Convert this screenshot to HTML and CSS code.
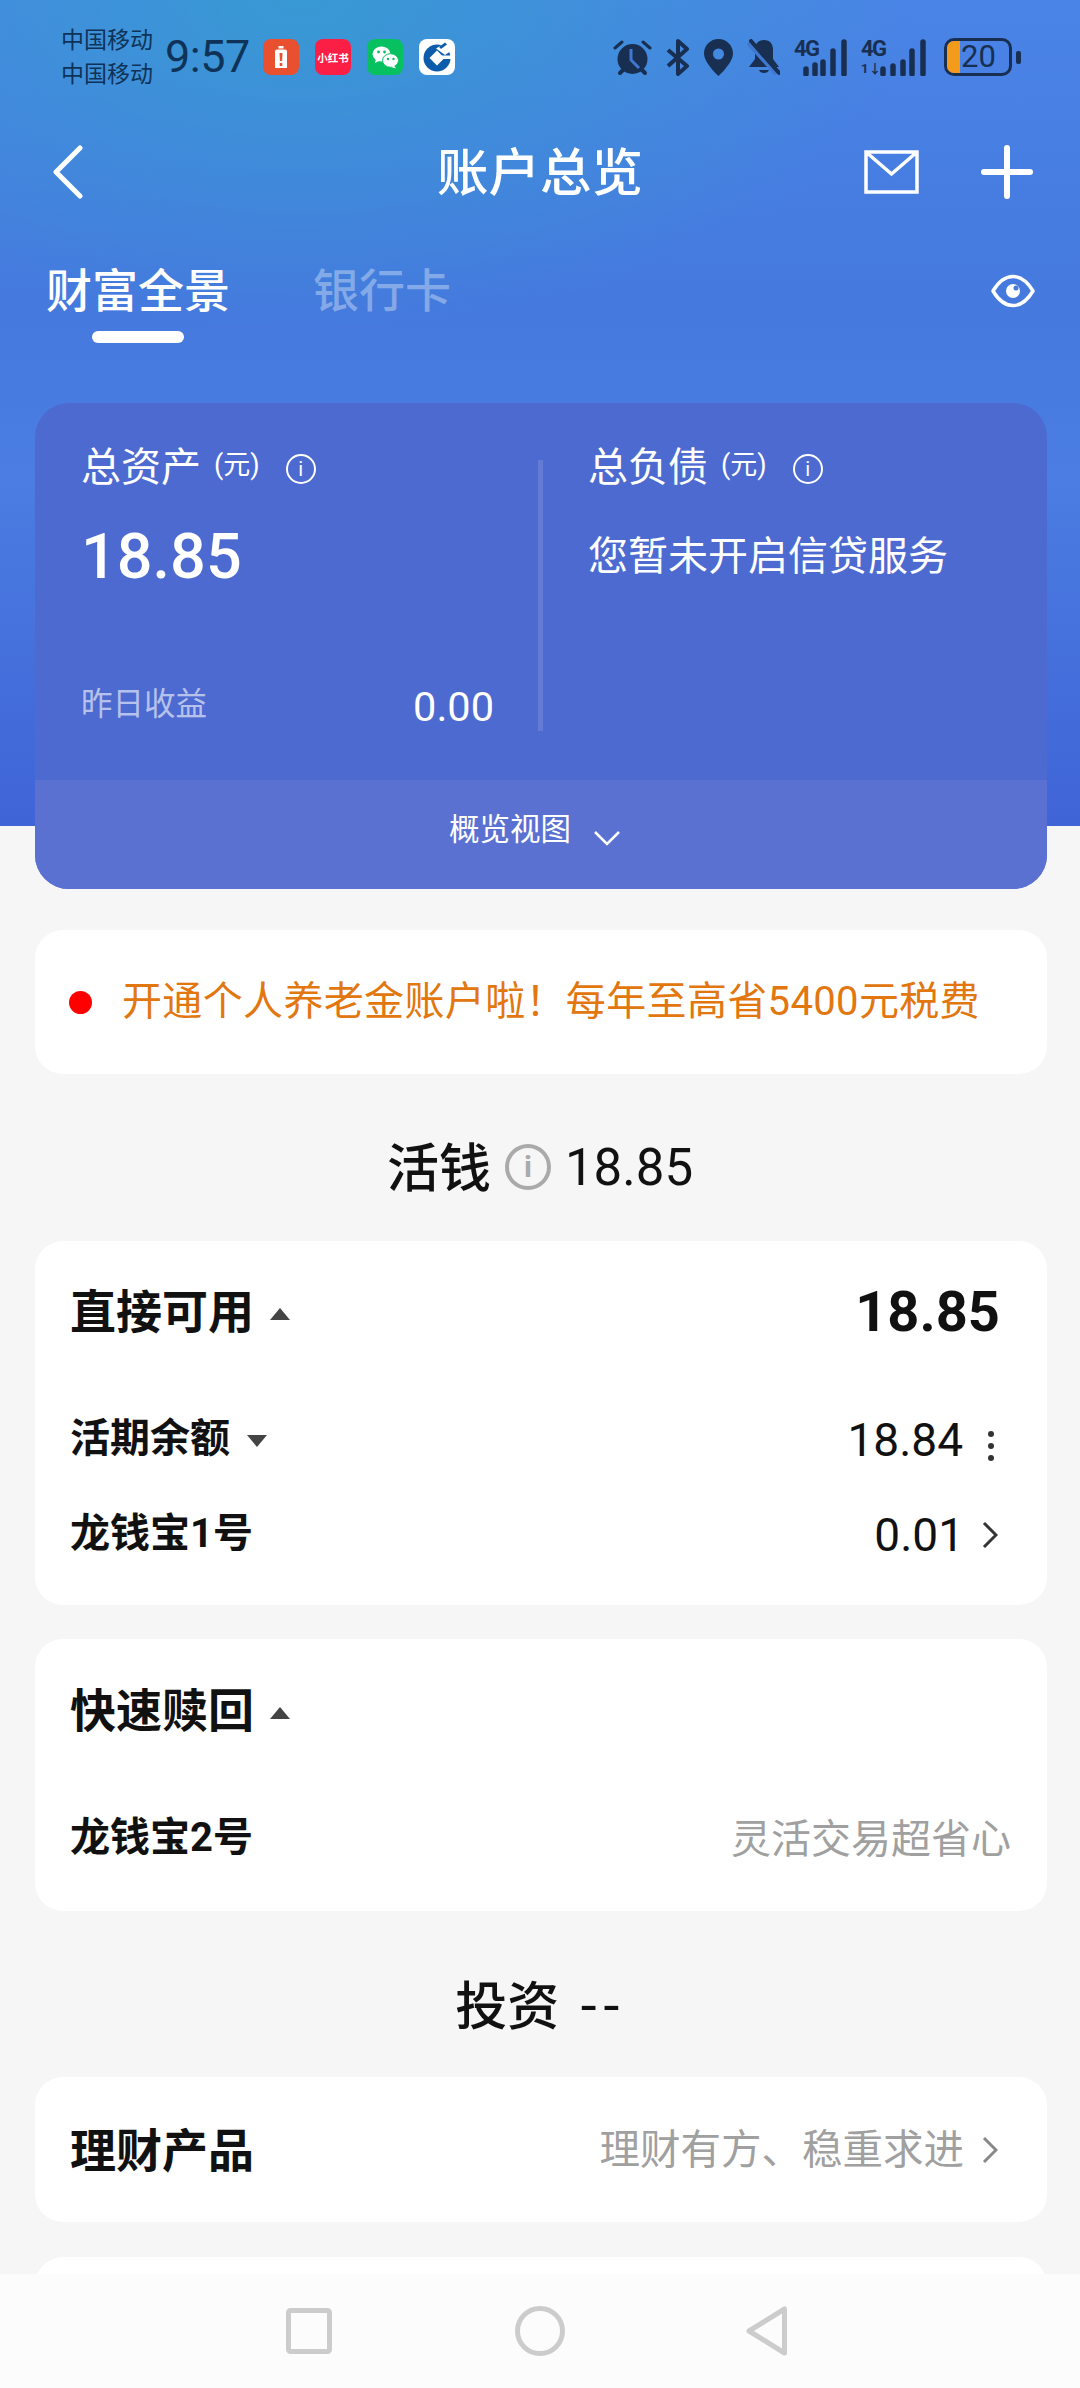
FILE: index.html
```html
<!DOCTYPE html>
<html lang="zh-CN">
<head>
    <meta charset="UTF-8">
    <meta name="viewport" content="width=device-width, initial-scale=1.0">
    <title>账户总览</title>
    <link rel="stylesheet" href="styles.css">
</head>
<body>
<div class="page">
    <div class="status">
        <div class="carrier"><span>中国移动</span><span>中国移动</span></div>
        <div class="clock">9:57</div>
        <div class="app-icons">
            <div class="app app-red">
                <svg viewBox="0 0 36 36" width="36" height="36"><path d="M15.500 7h5v2.500h-5z" fill="#fff"/><path d="M14 10.500h8a2 2 0 0 1 2 2V29h-12V12.500a2 2 0 0 1 2-2z" fill="#fff"/><path d="M16.500 14h3l-.4 8h-2.200zM16.700 24h2.600v3h-2.600z" fill="#e8502f"/></svg>
            </div>
            <div class="app app-xhs"><span>小红书</span></div>
            <div class="app app-wx">
                <svg viewBox="0 0 36 36" width="36" height="36"><ellipse cx="14.500" cy="15" rx="9" ry="7.500" fill="#fff"/><path d="M9 20l-1 4 5-2.500z" fill="#fff"/><ellipse cx="23.500" cy="21.500" rx="8" ry="6.800" fill="#fff" stroke="#07c160" stroke-width="1"/><path d="M27 26.500l2 3-5-1.500z" fill="#fff"/><circle cx="11.500" cy="13" r="1.400" fill="#07c160"/><circle cx="17.500" cy="13" r="1.400" fill="#07c160"/><circle cx="21" cy="20" r="1.200" fill="#07c160"/><circle cx="26.500" cy="20" r="1.200" fill="#07c160"/></svg>
            </div>
            <div class="app app-ccb">
                <svg viewBox="0 0 36 36" width="36" height="36"><circle cx="18" cy="19" r="13.500" fill="#0d5bab"/><path d="M18 11.500l7.500 7.500-7.500 7.500-7.500-7.500z" fill="#fff"/><path d="M23 16.500h10v3.500H23z" fill="#fff"/><path d="M17 9.500L27 3.500l7 7-8 5.500z" fill="#fff"/><path d="M20 8l6-4.500 2 2-6 4.500z" fill="#0d5bab"/></svg>
            </div>
        </div>
        <div class="sys-icons">
            <svg class="sys" viewBox="0 0 39 37" width="39" height="37"><path d="M2 9l7-6M37 9l-7-6" stroke="#182f52" stroke-width="3" fill="none" stroke-linecap="round"/><circle cx="19.500" cy="20" r="15" fill="#182f52"/><path d="M7 34l4-4M32 34l-4-4" stroke="#182f52" stroke-width="4" stroke-linecap="round"/><path d="M18 10v11l8 8" stroke="#3f78d0" stroke-width="3" fill="none"/></svg>
            <svg class="sys" viewBox="0 0 24 37" width="24" height="37"><path d="M2 11l19 16-9 8V2l9 8L2 27" stroke="#182f52" stroke-width="4" fill="none" stroke-linejoin="round"/></svg>
            <svg class="sys" viewBox="0 0 29 37" width="29" height="37"><path fill-rule="evenodd" d="M14.500 0C6.500 0 0 6.300 0 14.500 0 24 14.500 37 14.500 37S29 24 29 14.500C29 6.300 22.500 0 14.500 0zm0 9.500a5.500 5.500 0 1 1 0 11 5.500 5.500 0 0 1 0-11z" fill="#182f52"/></svg>
            <svg class="sys" viewBox="0 0 33 37" width="33" height="37"><path d="M17 1c-6 0-9 4-9 10v9l-6 8h30l-6-8v-9C26 5 23 1 17 1zM12 31h10c-1 4-9 4-10 0z" fill="#182f52"/><path d="M2 3l28 31" stroke="#3f78d0" stroke-width="7"/><path d="M4 2l28 32" stroke="#182f52" stroke-width="4" stroke-linecap="round"/></svg>
            <div class="signal">
                <span class="net">4G</span>
                <svg viewBox="0 0 46 37" width="46" height="37"><path d="M5 30v5M14 26v9M22 23v12M32 12v23M43 3v32" stroke="#182f52" stroke-width="5.500" stroke-linecap="round"/></svg>
            </div>
            <div class="signal signal-two">
                <span class="net">4G</span>
                <span class="updown">1↓</span>
                <svg viewBox="0 0 46 37" width="46" height="37"><path d="M3 30v5M13 27v8M23 23v12M32 12v23M43 3v32" stroke="#182f52" stroke-width="5.500" stroke-linecap="round"/></svg>
            </div>
            <div class="battery">
                <div class="battery-box"><span class="battery-fill"></span><span class="battery-num">20</span></div>
                <span class="battery-nub"></span>
            </div>
        </div>
    </div>

    <div class="topbar">
        <svg class="back" viewBox="0 0 30 54" width="30" height="54"><path d="M27 3L3 27l24 24" stroke="#fff" stroke-width="5" fill="none" stroke-linecap="round" stroke-linejoin="round"/></svg>
        <h1 class="title">账户总览</h1>
        <div class="top-actions">
            <svg viewBox="0 0 55 44" width="55" height="44"><path d="M2 2h51v40H2zM2 2l25.500 22L53 2" stroke="#fff" stroke-width="3.500" fill="none"/></svg>
            <svg viewBox="0 0 52 54" width="52" height="54"><path d="M26 3v48M3 27h46" stroke="#fff" stroke-width="6" stroke-linecap="round"/></svg>
        </div>
    </div>

    <div class="tabs">
        <div class="tab tab-active">财富全景<span class="tab-line"></span></div>
        <div class="tab">银行卡</div>
        <svg class="eye" viewBox="0 0 44 34" width="44" height="34"><path d="M2 17C8 7 14 2.500 22 2.500S36 7 42 17c-6 10-12 14.500-20 14.500S8 27 2 17z" stroke="#fff" stroke-width="3.500" fill="none" stroke-linejoin="round"/><circle cx="22" cy="17" r="7" fill="#fff"/><circle cx="25" cy="14" r="2.500" fill="#4579dc"/></svg>
    </div>

    <div class="summary">
        <div class="summary-main">
            <div class="col col-assets">
                <div class="label">总资产<small>(元)</small><span class="info"><b>i</b></span></div>
                <div class="amount">18.85</div>
                <div class="yesterday"><span>昨日收益</span><strong>0.00</strong></div>
            </div>
            <div class="divider"></div>
            <div class="col">
                <div class="label">总负债<small>(元)</small><span class="info"><b>i</b></span></div>
                <div class="no-credit">您暂未开启信贷服务</div>
            </div>
        </div>
        <div class="summary-foot">
            <span>概览视图</span>
            <svg viewBox="0 0 28 16" width="28" height="16"><path d="M2 2l12 12L26 2" stroke="#fff" stroke-width="2.500" fill="none"/></svg>
        </div>
    </div>

    <div class="notice card-box">
        <span class="notice-dot"></span>
        <span class="notice-text">开通个人养老金账户啦！每年至高省5400元税费</span>
    </div>

    <div class="section-head">
        <span class="section-name">活钱</span>
        <span class="info info-grey"><b>i</b></span>
        <span class="section-num">18.85</span>
    </div>

    <div class="card card-box card-cash">
        <div class="row row-head">
            <div class="row-name">直接可用<i class="tri tri-up"></i></div>
            <div class="big-num">18.85</div>
        </div>
        <div class="row row-sub">
            <div class="row-name">活期余额<i class="tri tri-down"></i></div>
            <div class="row-value">18.84<span class="dots"><i></i><i></i><i></i></span></div>
        </div>
        <div class="row row-sub row-third">
            <div class="row-name">龙钱宝1号</div>
            <div class="row-value">0.01
                <svg class="chev" viewBox="0 0 16 28" width="16" height="28"><path d="M2 2l12 12L2 26" stroke="#333" stroke-width="3" fill="none"/></svg>
            </div>
        </div>
    </div>

    <div class="card card-box card-quick">
        <div class="row row-head">
            <div class="row-name">快速赎回<i class="tri tri-up"></i></div>
        </div>
        <div class="row row-sub">
            <div class="row-name">龙钱宝2号</div>
            <div class="hint hint-out">灵活交易超省心</div>
        </div>
    </div>

    <div class="section-head section-invest">
        <span class="section-name">投资</span>
        <span class="section-num section-dash">--</span>
    </div>

    <div class="card-box card-link">
        <div class="row-name">理财产品</div>
        <div class="hint"><span class="hint-text">理财有方、稳重求进</span>
            <svg class="chev" viewBox="0 0 16 28" width="16" height="28"><path d="M2 2l12 12L2 26" stroke="#888" stroke-width="3" fill="none"/></svg>
        </div>
    </div>

    <div class="card-box card-link"></div>

    <div class="navbar">
        <svg viewBox="0 0 46 46" width="46" height="46"><rect x="2.500" y="2.500" width="41" height="41" rx="2" stroke="#ccc" stroke-width="5" fill="none"/></svg>
        <svg viewBox="0 0 50 50" width="50" height="50"><circle cx="25" cy="25" r="22.500" stroke="#ccc" stroke-width="5" fill="none"/></svg>
        <svg class="nav-back" viewBox="0 0 42 50" width="42" height="50"><path d="M38.500 3v44L3 25z" stroke="#ccc" stroke-width="5" fill="none" stroke-linejoin="round"/></svg>
    </div>
</div>
</body>
</html>
```

FILE: styles.css
```css
* {
    box-sizing: border-box;
}
body {
    margin: 0;
    font-family: Roboto, "Noto Sans CJK SC", sans-serif;
    color: #111;
}
.page {
    position: relative;
    width: 1080px;
    height: 2388px;
    overflow: hidden;
    background-color: #f6f6f6;
    background-image:
        radial-gradient(ellipse 620px 330px at 300px 0, rgba(50, 160, 205, 0.75), rgba(50, 160, 205, 0)),
        linear-gradient(180deg, #4a84e6 0, #4579de 300px, #4b7de2 480px, #3f64d6 826px);
    background-size: 1080px 826px;
    background-repeat: no-repeat;
}

/* status bar */
.status {
    display: flex;
    align-items: center;
    height: 114px;
    padding-left: 61px;
    color: #0f3358;
}
.carrier {
    display: flex;
    flex-direction: column;
    font-size: 23px;
    line-height: 34px;
    width: 104px;
    margin-top: 2px;
}
.clock {
    font-size: 45px;
    letter-spacing: -0.5px;
    line-height: 50px;
    width: 98px;
}
.app-icons {
    display: flex;
    gap: 16px;
}
.app {
    width: 36px;
    height: 36px;
    border-radius: 8px;
    overflow: hidden;
    display: flex;
    align-items: center;
    justify-content: center;
}
.app-red {
    background: #e8502f;
}
.app-xhs {
    background: #fb1f45;
    color: #fff;
    font-size: 10.500px;
    font-weight: 700;
    white-space: nowrap;
}
.app-wx {
    background: #07c160;
}
.app-ccb {
    background: #fff;
}
.sys-icons {
    display: flex;
    align-items: center;
    gap: 14px;
    margin-left: auto;
    margin-right: 59px;
}
.sys {
    display: block;
}
.signal {
    position: relative;
    width: 53px;
    height: 37px;
    display: flex;
    justify-content: flex-end;
    align-items: flex-end;
}
.signal-two {
    width: 65px;
}
.net {
    position: absolute;
    left: 0;
    top: -2px;
    font-size: 22px;
    font-weight: 700;
    letter-spacing: -1.500px;
    line-height: 24px;
    color: #182f52;
}
.updown {
    position: absolute;
    left: 0;
    bottom: 0;
    font-size: 13px;
    font-weight: 700;
    line-height: 14px;
    color: #182f52;
}
.battery {
    display: flex;
    align-items: center;
    gap: 4px;
    margin-left: 4px;
}
.battery-box {
    position: relative;
    width: 68px;
    height: 38px;
    border: 3px solid #182f52;
    border-radius: 10px;
    overflow: hidden;
}
.battery-fill {
    position: absolute;
    left: 0;
    top: 0;
    bottom: 0;
    width: 13px;
    background: #f59b1c;
}
.battery-num {
    position: absolute;
    left: 14px;
    top: 0;
    font-size: 31px;
    line-height: 32px;
    color: #182f52;
}
.battery-nub {
    width: 5px;
    height: 13px;
    border-radius: 2px;
    background: #182f52;
}

/* title bar */
.topbar {
    display: grid;
    grid-template-columns: 1fr auto 1fr;
    align-items: center;
    height: 116px;
    padding: 0 50px;
}
.back {
    margin-left: 3px;
}
.title {
    margin: -8px 0 0;
    font-size: 51.500px;
    font-weight: 500;
    color: #fff;
}
.top-actions {
    display: flex;
    align-items: center;
    justify-content: flex-end;
    gap: 62px;
    margin-right: -3px;
}

/* tabs */
.tabs {
    display: flex;
    align-items: flex-start;
    height: 173px;
    padding: 31px 45px 0 46px;
    gap: 83px;
}
.tab {
    display: flex;
    flex-direction: column;
    align-items: center;
    font-size: 46px;
    line-height: 60px;
    font-weight: 500;
    color: rgba(255, 255, 255, 0.35);
}
.tab-active {
    color: #fff;
}
.tab-line {
    width: 92px;
    height: 12px;
    margin-top: 10px;
    border-radius: 6px;
    background: #fff;
}
.eye {
    margin-left: auto;
    margin-top: 13px;
}

/* summary card */
.summary {
    margin: 0 33px 0 35px;
    height: 486px;
    border-radius: 34px;
    overflow: hidden;
    background: #4d6ad1;
    color: #fff;
}
.summary-main {
    display: flex;
    height: 377px;
    padding-left: 46px;
}
.col {
    padding-top: 36px;
}
.col-assets {
    width: 413px;
}
.divider {
    width: 5px;
    height: 271px;
    margin: 57px 45px 0 44px;
    background: rgba(255, 255, 255, 0.12);
}
.label {
    display: flex;
    align-items: center;
    height: 50px;
    font-size: 40px;
}
.label small {
    font-size: 27px;
    margin: -4px 0 0 13px;
}
.label .info {
    margin: 10px 0 0 26px;
}
.info {
    display: inline-flex;
    align-items: center;
    justify-content: center;
    width: 30px;
    height: 30px;
    border: 2.500px solid currentColor;
    border-radius: 50%;
    font-size: 20px;
    line-height: 1;
}
.info b {
    font-weight: 400;
}
.amount {
    margin-top: 33px;
    font-size: 63px;
    font-weight: 500;
    line-height: 70px;
}
.no-credit {
    margin-top: 33px;
    font-size: 40px;
    line-height: 70px;
}
.yesterday {
    display: flex;
    align-items: center;
    justify-content: space-between;
    margin-top: 88px;
    height: 50px;
}
.yesterday span {
    font-size: 31.500px;
    margin-top: -8px;
    color: rgba(255, 255, 255, 0.6);
}
.yesterday strong {
    font-size: 41.500px;
    font-weight: 400;
    margin-top: 2px;
}
.summary-foot {
    display: flex;
    align-items: center;
    justify-content: center;
    gap: 22px;
    height: 109px;
    padding-right: 12px;
    background: #5b71d1;
    font-size: 30.500px;
}
.summary-foot span {
    margin-top: -16px;
}
.summary-foot svg {
    margin-top: 6px;
}

/* white boxes */
.card-box {
    margin: 0 33px 0 35px;
    border-radius: 28px;
    background: #fff;
}
.notice {
    display: flex;
    align-items: center;
    gap: 30px;
    height: 144px;
    margin-top: 41px;
    padding-left: 34px;
    font-size: 40px;
    color: #e2760f;
}
.notice-text {
    letter-spacing: 0.350px;
    margin-top: -8px;
}
.notice-dot {
    width: 23px;
    height: 23px;
    border-radius: 50%;
    background: #f00;
}
.section-head {
    display: flex;
    align-items: center;
    justify-content: center;
    gap: 14px;
    height: 70px;
    margin: 58px 0 39px;
}
.section-invest {
    margin: 59px 0 37px;
    gap: 20px;
}
.section-name {
    font-size: 52px;
    font-weight: 500;
    margin-top: -6px;
}
.section-num {
    font-size: 51px;
}
.section-dash {
    font-family: "DejaVu Sans", sans-serif;
    font-size: 52px;
    letter-spacing: 4px;
    margin-top: -2px;
}
.info-grey {
    width: 46px;
    height: 46px;
    border-width: 4px;
    color: #aaa;
    font-size: 30px;
}
.info-grey b {
    font-weight: 700;
}
.card-cash {
    height: 364px;
    padding: 40px 47px 0 35px;
}
.card-quick {
    height: 272px;
    margin-top: 34px;
    padding: 41px 47px 0 35px;
}
.row {
    display: flex;
    align-items: center;
    justify-content: space-between;
}
.row-head {
    height: 60px;
}
.row-sub {
    height: 50px;
    margin-top: 72px;
}
.row-third {
    margin-top: 45px;
}
.row-name {
    display: flex;
    align-items: center;
    font-size: 46px;
    font-weight: 700;
    margin-top: -6px;
}
.row-sub .row-name {
    font-size: 40px;
}
.tri {
    width: 0;
    height: 0;
    margin-left: 16px;
    border-left: 10px solid transparent;
    border-right: 10px solid transparent;
}
.tri-up {
    border-bottom: 12px solid #444;
    margin-top: 12px;
}
.tri-down {
    border-top: 12px solid #444;
    margin-left: 17px;
    margin-top: 12px;
}
.big-num {
    font-size: 56px;
    font-weight: 700;
    margin-top: 2px;
}
.row-value {
    display: flex;
    align-items: center;
    font-size: 46px;
    margin-top: 3px;
}
.dots {
    display: flex;
    flex-direction: column;
    gap: 6px;
    margin: 12px 6px 0 25px;
}
.dots i {
    width: 6px;
    height: 6px;
    border-radius: 50%;
    background: #333;
}
.chev {
    margin: 0 2px 0 18px;
}
.hint {
    display: flex;
    align-items: center;
    font-size: 40.500px;
    color: #a0a0a0;
}
.hint-text {
    margin-top: -6px;
}
.hint-out {
    font-size: 40px;
    margin-right: -11px;
    margin-top: -2px;
}
.card-link {
    display: flex;
    align-items: center;
    justify-content: space-between;
    height: 145px;
    margin-bottom: 35px;
    padding: 0 47px 0 35px;
}

/* android nav, sits over the list */
.navbar {
    position: absolute;
    left: 0;
    right: 0;
    bottom: 0;
    height: 114px;
    display: flex;
    align-items: center;
    background: #fcfcfc;
    padding: 0 0 0 286px;
    gap: 183px;
}
.nav-back {
    margin-left: -2px;
}
```
